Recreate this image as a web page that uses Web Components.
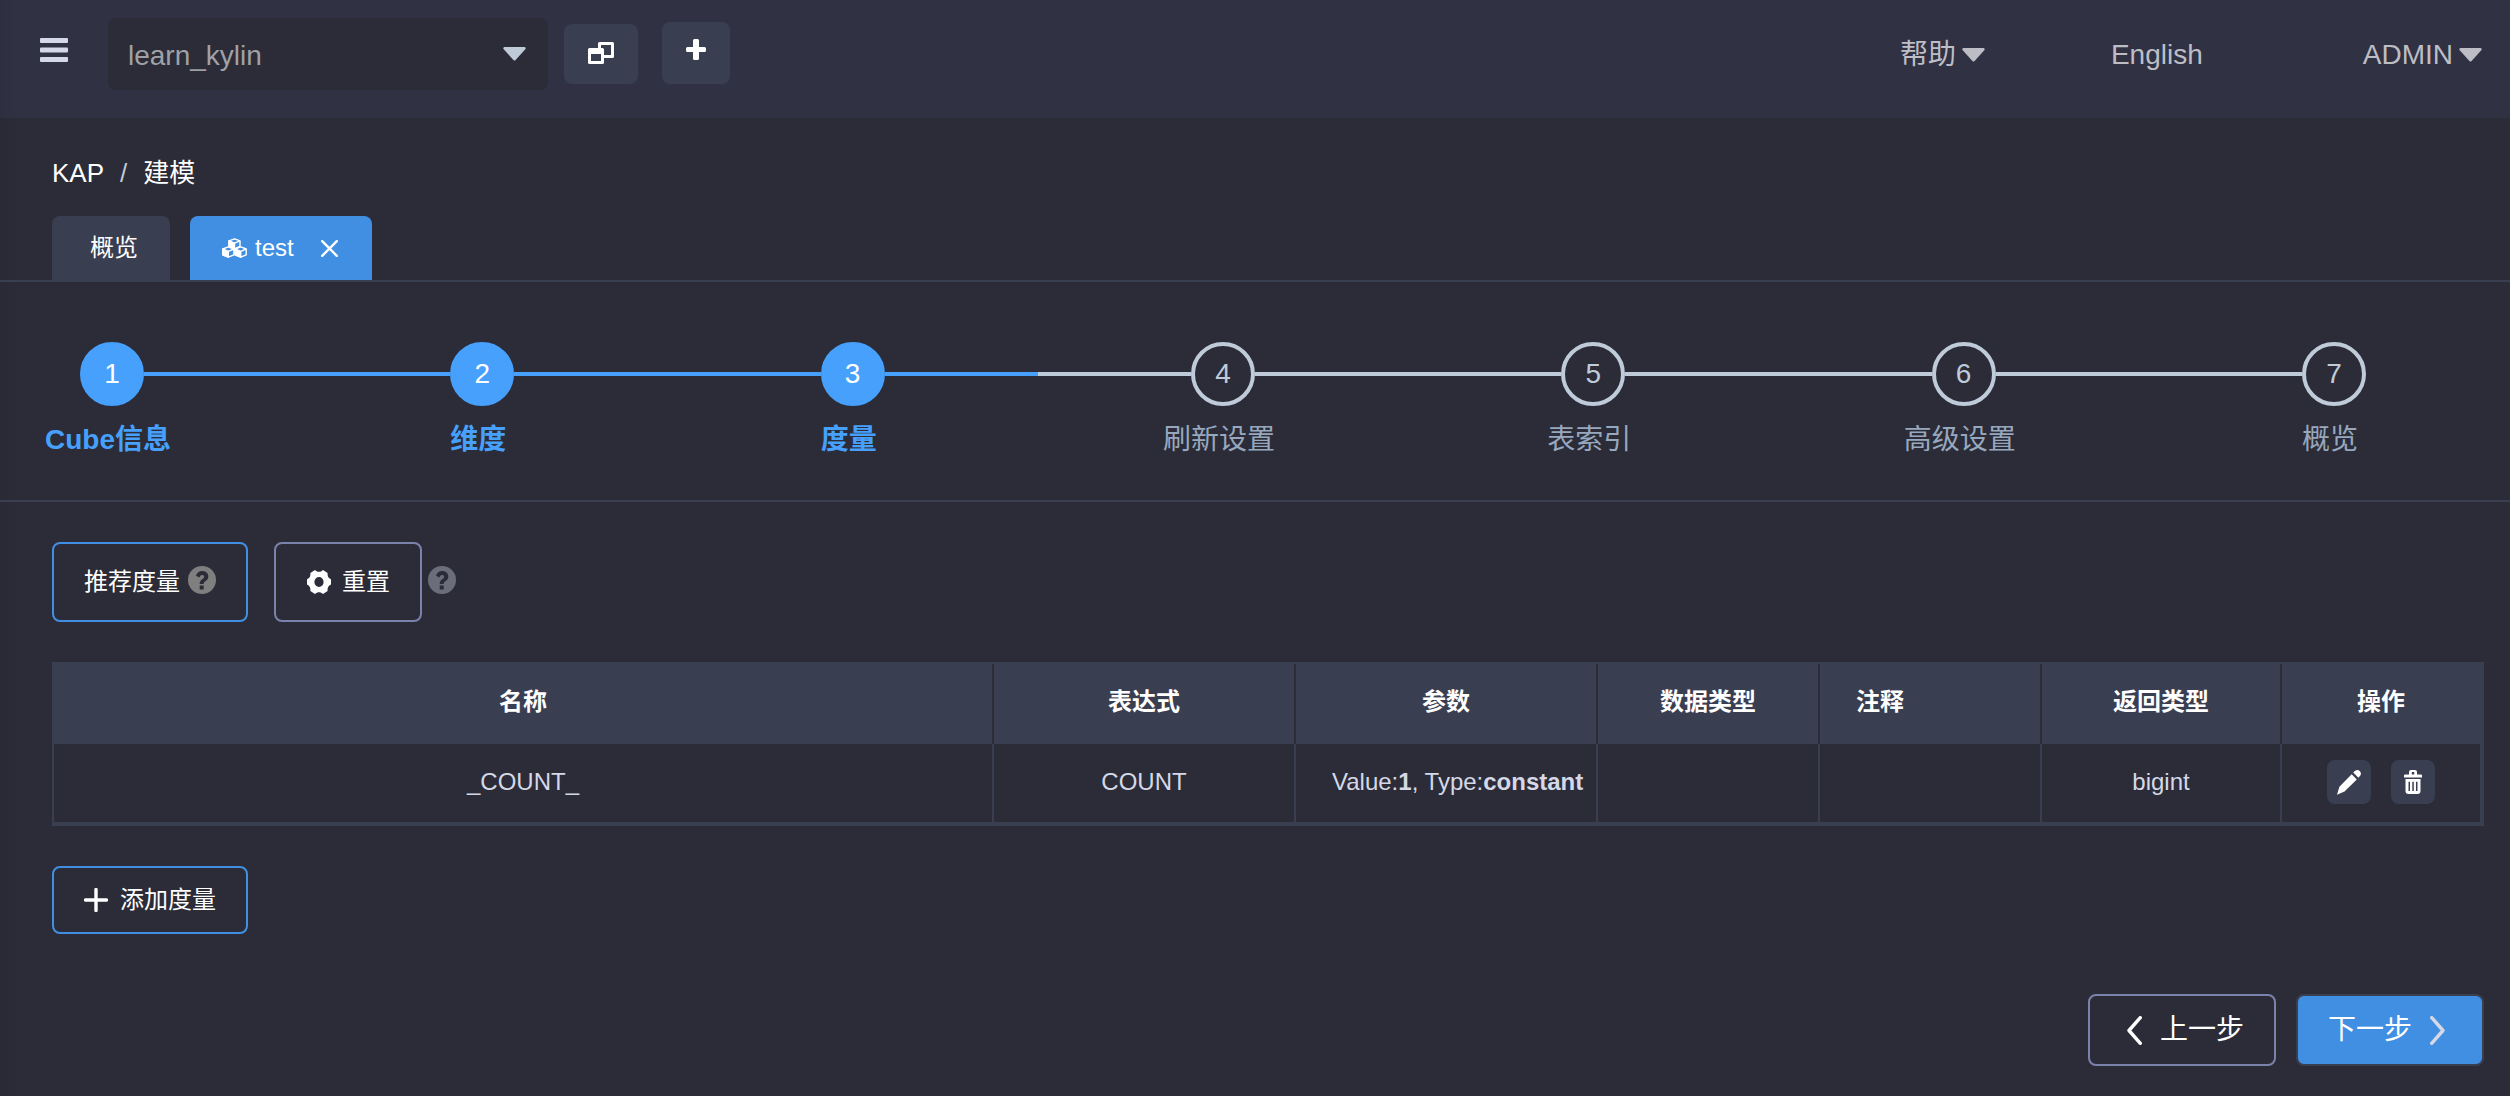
<!DOCTYPE html>
<html lang="zh-CN">
<head>
<meta charset="utf-8">
<title>KAP - 建模</title>
<style>
  :root {
    --bg: #2b2c38;
    --bar: #303142;
    --panel: #3a3e51;
    --blue: #418fe3;
    --step: #46a0fc;
    --muted: #bfcbd9;
    --edge: linear-gradient(to right, rgba(0,0,0,.06), rgba(0,0,0,0) 20px);
  }
  html { background: var(--bg); }
  body {
    margin: 0;
    min-height: 100vh;
    background: var(--edge), var(--bg);
    color: #fff;
    font: 24px/34px "Liberation Sans", "Noto Sans CJK SC", sans-serif;
  }
</style>
</head>
<body>
<kap-app></kap-app>

<script>
const ICONS = {
  menu: [28, 24, '<rect x="0" y="0" width="28" height="5" rx="1"/><rect x="0" y="9.5" width="28" height="5" rx="1"/><rect x="0" y="19" width="28" height="5" rx="1"/>'],
  caret: [23, 14, '<path d="M1.5 0h20a1.3 1.3 0 0 1 1 2L12.6 13a1.5 1.5 0 0 1-2.2 0L.5 2a1.3 1.3 0 0 1 1-2z"/>'],
  windows: [26, 22, '<path fill-rule="evenodd" d="M11.500 0h13a1.500 1.500 0 0 1 1.500 1.500v13a1.500 1.500 0 0 1-1.500 1.500H16v4.500a1.500 1.500 0 0 1-1.500 1.500h-13A1.500 1.500 0 0 1 0 20.500v-13A1.500 1.500 0 0 1 1.500 6H10V1.500A1.500 1.500 0 0 1 11.500 0zM13 3v3h1.500A1.500 1.500 0 0 1 16 7.500V13h7V3zM3 12v7h10v-7z"/>'],
  plusBold: [20, 22, '<path d="M8.500 0h3a1.500 1.500 0 0 1 1.500 1.500V8h5.500A1.500 1.500 0 0 1 20 9.500v2a1.500 1.500 0 0 1-1.500 1.500H13v6.500a1.500 1.500 0 0 1-1.500 1.500h-3A1.500 1.500 0 0 1 7 19.500V13H1.500A1.500 1.500 0 0 1 0 11.500v-2A1.500 1.500 0 0 1 1.500 8H7V1.500A1.500 1.500 0 0 1 8.500 0z"/>'],
  cubes: [25, 20, '<g stroke="currentColor" stroke-width="1.400" stroke-linejoin="round"><path fill="none" d="M12.500 .8l5.500 2v5.600l-5.500 2.300L7 8.400V2.800z"/><path d="M7 2.800l5.500 2.300v5.600L7 8.400z"/><path fill="none" d="M12.500 5.100L18 2.800"/><path fill="none" d="M6.300 8.900l5.600 2.100v5.800l-5.600 2.400-5.500-2.400V11z"/><path d="M.8 11l5.500 2.300v5.900L.8 16.800z"/><path fill="none" d="M6.300 13.300l5.600-2.300"/><path fill="none" d="M18.700 8.900l5.500 2.100v5.800l-5.500 2.400-5.600-2.400V11z"/><path d="M13.100 11l5.600 2.300v5.900l-5.600-2.400z"/><path fill="none" d="M18.700 13.300l5.500-2.300"/></g>'],
  close: [17, 17, '<path d="M1.200 1.200l14.600 14.600M15.800 1.200L1.200 15.800" fill="none" stroke="currentColor" stroke-width="2.400" stroke-linecap="round"/>'],
  help: [28, 28, '<path fill-rule="evenodd" d="M14 0a14 14 0 1 1 0 28 14 14 0 0 1 0-28zM8 9.800l3.400 1.700c.5-1.600 1.300-2.500 2.700-2.500 1.200 0 2 .7 2 1.700 0 .9-.5 1.500-1.900 2.500-1.800 1.200-2.500 2.400-2.500 4.300v.5h4v-.3c0-1 .4-1.500 1.700-2.400 1.900-1.200 2.900-2.700 2.900-4.800 0-3.300-2.600-5.500-6.200-5.500-3 0-5.200 1.600-6.100 4.800zM11.700 19.500v4h4v-4z"/>'],
  gear: [26, 24, '<path transform="translate(1 0) scale(1 1.090)" fill-rule="evenodd" d="M8 0c1.300 1.200 2.600 1.700 4 1.700S14.700 1.200 16 0l4.600 2.700c-.4 2.800.8 4.800 3.400 5.900v4.800c-2.600 1.100-3.800 3.100-3.400 5.900L16 22c-1.300-1.200-2.600-1.700-4-1.700S9.300 20.800 8 22l-4.600-2.700C3.800 16.500 2.600 14.500 0 13.400V8.600C2.600 7.500 3.800 5.500 3.400 2.700zM12 6.400a4.600 4.600 0 1 0 0 9.200 4.600 4.600 0 0 0 0-9.200z"/>'],
  pencil: [24, 25, '<path d="M16.200 2.500l1.600-1.400c1.600-1.500 3.600-1.400 4.900-.1 1.500 1.500 1.700 3.600.2 5.100l-1.500 1.600zM14.700 4.200l5.100 5.300L7.500 21.600 0 24.800l2.400-8z"/>'],
  trash: [18, 24, '<path fill-rule="evenodd" d="M7 0h4a2 2 0 0 1 2 2v2.500h4a1 1 0 0 1 1 1V7.500H0v-2a1 1 0 0 1 1-1h4V2a2 2 0 0 1 2-2zM7.800 2v2.500h2.400V2zM1.500 9h15v12a3 3 0 0 1-3 3h-9a3 3 0 0 1-3-3zM4.500 11.800V21H6v-9.200zM8.300 11.800V21h1.500v-9.200zM12 11.800V21h1.500v-9.200z"/>'],
  plus: [24, 24, '<path d="M12 1.500v21M1.500 12h21" fill="none" stroke="currentColor" stroke-width="3.400" stroke-linecap="round"/>'],
  left: [15, 29, '<path d="M13.300 1.700L2 14.500l11.300 12.800" fill="none" stroke="currentColor" stroke-width="3.400" stroke-linecap="round" stroke-linejoin="round"/>'],
  right: [15, 29, '<path d="M1.700 1.700L13 14.500 1.700 27.300" fill="none" stroke="currentColor" stroke-width="3.400" stroke-linecap="round" stroke-linejoin="round"/>']
};

const RESET = `
  *, *::before { box-sizing: border-box; }
  button, select { font: inherit; color: inherit; margin: 0; padding: 0; border: 0; background: none; cursor: pointer; }
  a { color: inherit; text-decoration: none; }
  ul, ol { list-style: none; margin: 0; padding: 0; }
`;

function define(name, render) {
  customElements.define(name, class extends HTMLElement {
    connectedCallback() {
      if (this.shadowRoot) return;
      const template = document.createElement('template');
      template.innerHTML = render(this);
      this.attachShadow({ mode: 'open' }).append(template.content.cloneNode(true));
    }
  });
}

define('kap-icon', el => {
  const [w, h, body] = ICONS[el.getAttribute('name')];
  return `<style>:host { display: inline-flex; flex: none; } svg { display: block; }</style>
    <svg width="${w}" height="${h}" viewBox="0 0 ${w} ${h}" fill="currentColor" aria-hidden="true">${body}</svg>`;
});

define('kap-button', () => `
  <style>${RESET}
    :host { display: inline-flex; }
    button {
      display: flex; align-items: center; justify-content: center; gap: var(--gap, 8px);
      height: var(--h, 80px); padding: var(--pad, 0 30px);
      border: 2px solid #7c82ab; border-radius: 8px; white-space: nowrap;
    }
    :host([kind="accent"]) button { border-color: var(--blue); }
    :host([kind="primary"]) button { border-color: var(--panel); background: var(--blue); }
    :host([size="nav"]) button { height: 72px; gap: 18px; font-size: 28px; }
  </style>
  <button type="button"><slot></slot></button>`);

define('kap-tool', el => `
  <style>${RESET}
    :host { display: inline-flex; }
    button {
      display: flex; align-items: center; justify-content: center;
      width: var(--w, 44px); height: var(--h, 44px);
      padding-bottom: var(--lift, 0); border-radius: 8px; background: var(--panel);
    }
  </style>
  <button type="button" aria-label="${el.getAttribute('label')}"><slot></slot></button>`);

define('kap-header', () => `
  <style>${RESET}
    :host { display: block; background: var(--edge), var(--bar); font-size: 28px; }
    header { display: flex; align-items: flex-start; height: 118px; padding: 18px 28px 0 40px; }
    .menu { display: flex; margin: 20px 40px 0 0; color: #d5d8e6; }
    .project { position: relative; width: 440px; margin-right: 16px; }
    select {
      appearance: none; display: block; width: 100%; height: 72px; padding: 4px 60px 0 20px;
      border-radius: 8px; background: var(--bg); color: #a0a1a6;
    }
    .project kap-icon { position: absolute; right: 22px; top: 29px; color: var(--muted); pointer-events: none; }
    .switch { --w: 74px; --h: 60px; --lift: 2px; margin: 6px 24px 0 0; }
    .add { --w: 68px; --h: 62px; --lift: 6px; margin-top: 4px; }
    nav { margin-left: auto; color: #bdbec5; }
    ul { display: flex; line-height: 74px; }
    button { display: flex; align-items: center; gap: 6px; }
    .help { margin-right: 126px; }
    .lang { margin-right: 160px; }
  </style>
  <header>
    <button class="menu" type="button" aria-label="菜单"><kap-icon name="menu"></kap-icon></button>
    <div class="project">
      <select aria-label="项目"><option>learn_kylin</option></select>
      <kap-icon name="caret"></kap-icon>
    </div>
    <kap-tool class="switch" label="项目列表"><kap-icon name="windows"></kap-icon></kap-tool>
    <kap-tool class="add" label="新建"><kap-icon name="plusBold"></kap-icon></kap-tool>
    <nav><ul>
      <li class="help"><button type="button">帮助<kap-icon name="caret"></kap-icon></button></li>
      <li class="lang"><a href="#en">English</a></li>
      <li><button type="button">ADMIN<kap-icon name="caret"></kap-icon></button></li>
    </ul></nav>
  </header>`);

define('kap-breadcrumb', () => `
  <style>${RESET}
    :host { display: block; padding: 38px 52px 26px; font-size: 26px; }
    ol { display: flex; gap: 16px; }
    .sep { color: var(--muted); }
  </style>
  <nav aria-label="breadcrumb"><ol>
    <li><a href="#kap">KAP</a></li><li class="sep" aria-hidden="true">/</li><li><a href="#model">建模</a></li>
  </ol></nav>`);

define('kap-tabs', () => `
  <style>${RESET}
    :host { display: block; padding: 0 52px; border-bottom: 2px solid var(--panel); }
    div { display: flex; gap: 20px; }
    .tab { display: flex; align-items: center; height: 64px; border-radius: 8px 8px 0 0; background: var(--panel); }
    .overview { padding: 0 32px 0 38px; }
    .active { background: var(--blue); padding: 0 34px 0 32px; }
    .name { display: flex; align-items: center; gap: 8px; margin-right: 27px; }
    .close { display: flex; }
  </style>
  <div>
    <button class="tab overview" type="button">概览</button>
    <span class="tab active">
      <button class="name" type="button"><kap-icon name="cubes"></kap-icon>test</button>
      <button class="close" type="button" aria-label="关闭"><kap-icon name="close"></kap-icon></button>
    </span>
  </div>`);

define('kap-step', el => `
  <style>${RESET}
    :host { display: block; flex: 1; color: var(--muted); font-size: 28px; }
    :host([last]) { flex: none; width: 180px; }
    .head { display: flex; align-items: center; }
    .num {
      display: flex; align-items: center; justify-content: center; flex: none;
      width: 64px; height: 64px; border: 4px solid var(--muted); border-radius: 50%;
    }
    .line { flex: 1; height: 4px; background: var(--muted); }
    :host([last]) .line { display: none; }
    .label { display: flex; justify-content: center; width: 56px; margin-top: 16px; line-height: 36px; white-space: nowrap; color: #97a8be; }
    :host([state]) .num { background: var(--step); border-color: var(--step); color: #fff; }
    :host([state]) .label { color: var(--step); font-weight: bold; }
    :host([state="done"]) .line { background: var(--step); }
    :host([state="current"]) .line { background: linear-gradient(to right, var(--step) 50%, var(--muted) 50%); }
  </style>
  <div class="head"><span class="num">${el.getAttribute('num')}</span><span class="line"></span></div>
  <div class="label"><slot></slot></div>`);

define('kap-steps', () => `
  <style>
    :host { display: flex; padding: 60px 28px 42px 80px; border-bottom: 2px solid var(--panel); }
  </style><slot></slot>`);

define('kap-measures', () => `
  <style>${RESET}
    :host { display: block; border: 2px solid var(--panel); }
    table { width: 100%; table-layout: fixed; border-collapse: separate; border-spacing: 0; }
    th, td { padding: 0 36px; text-align: center; white-space: nowrap; border-right: 2px solid var(--panel); }
    th { height: 80px; padding-bottom: 4px; background: var(--panel); border-right-color: var(--bg); }
    th:last-child { border-right-color: var(--panel); }
    td { height: 80px; padding-bottom: 2px; border-bottom: 2px solid var(--panel); color: #d5d8e6; }
    .left { text-align: left; }
    .wide { width: 302px; } .mid { width: 222px; } .type { width: 240px; } .ops { width: 200px; }
    .args { padding-right: 0; text-align: left; }
    .actions { display: flex; justify-content: center; gap: 20px; color: #fff; }
  </style>
  <table>
    <thead><tr>
      <th>名称</th><th class="wide">表达式</th><th class="wide">参数</th><th class="mid">数据类型</th>
      <th class="mid left">注释</th><th class="type">返回类型</th><th class="ops">操作</th>
    </tr></thead>
    <tbody><tr>
      <td>_COUNT_</td><td>COUNT</td><td class="args">Value:<b>1</b>, Type:<b>constant</b></td><td></td><td></td><td>bigint</td>
      <td><div class="actions">
        <kap-tool label="编辑"><kap-icon name="pencil"></kap-icon></kap-tool>
        <kap-tool label="删除"><kap-icon name="trash"></kap-icon></kap-tool>
      </div></td>
    </tr></tbody>
  </table>`);

define('kap-app', () => `
  <style>${RESET}
    :host { display: block; }
    main { padding: 40px 26px 30px 52px; }
    .toolbar { display: flex; align-items: center; margin-bottom: 40px; }
    .reset { margin: 0 6px 0 26px; }
    .q, .tip { padding-bottom: 4px; }
    .q { color: #7f7f7f; }
    .tip { color: #6c6d7a; }
    .add { --h: 68px; --gap: 12px; margin-top: 40px; }
    .reset { --gap: 10px; }
    footer { display: flex; justify-content: flex-end; gap: 20px; margin-top: 60px; }
    .prev { --pad: 0 30px 0 37px; }
    .next { --pad: 0 37px 0 30px; }
    .next kap-icon { color: #d5d8e6; }
  </style>
  <kap-header></kap-header>
  <kap-breadcrumb></kap-breadcrumb>
  <kap-tabs></kap-tabs>
  <kap-steps>
    <kap-step num="1" state="done">Cube信息</kap-step>
    <kap-step num="2" state="done">维度</kap-step>
    <kap-step num="3" state="current">度量</kap-step>
    <kap-step num="4">刷新设置</kap-step>
    <kap-step num="5">表索引</kap-step>
    <kap-step num="6">高级设置</kap-step>
    <kap-step num="7" last>概览</kap-step>
  </kap-steps>
  <main>
    <div class="toolbar">
      <kap-button kind="accent">推荐度量<kap-icon class="q" name="help"></kap-icon></kap-button>
      <kap-button class="reset"><kap-icon name="gear"></kap-icon>重置</kap-button>
      <kap-icon class="tip" name="help"></kap-icon>
    </div>
    <kap-measures></kap-measures>
    <kap-button class="add" kind="accent"><kap-icon name="plus"></kap-icon>添加度量</kap-button>
    <footer>
      <kap-button class="prev" size="nav"><kap-icon name="left"></kap-icon>上一步</kap-button>
      <kap-button class="next" size="nav" kind="primary">下一步<kap-icon name="right"></kap-icon></kap-button>
    </footer>
  </main>`);
</script>
</body>
</html>
